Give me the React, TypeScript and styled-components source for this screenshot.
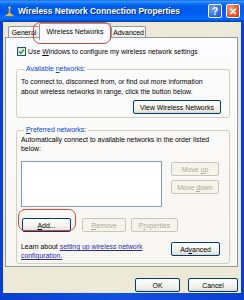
import React from "react";
import styled, { createGlobalStyle, css } from "styled-components";

const GlobalStyle = createGlobalStyle`
  html, body {
    margin: 0;
    padding: 0;
    background: #ffffff;
  }

  body {
    font-family: "Liberation Sans", Arial, sans-serif;
    font-size: 6.9px;
    color: #000000;
  }
`;

const Window = styled.div`
  position: relative;
  width: 244px;
  height: 300px;
  display: flex;
  flex-direction: column;
  background: linear-gradient(to right, #0a3fd0, #1250e0 50%, #0a3fd0);
  overflow: hidden;
`;

const TitleBar = styled.div`
  height: 22px;
  flex: none;
  display: flex;
  align-items: center;
  padding: 0 4px 0 4px;
  background: linear-gradient(
    to bottom,
    #0a62f0 0%,
    #3d98ff 6%,
    #1c84ff 12%,
    #0a6af2 20%,
    #005ce8 30%,
    #005cef 60%,
    #0062f8 70%,
    #0470fe 80%,
    #0066f0 88%,
    #0054d8 94%,
    #003a9e 100%
  );

  h1 {
    flex: 1;
    margin: 0 0 0 3px;
    color: #ffffff;
    font-size: 8.4px;
    font-weight: bold;
    white-space: nowrap;
    text-shadow: 1px 1px 0 #0a1f6e;
  }
`;

const CaptionButton = styled.div<{ $kind: "help" | "close" }>`
  width: 14px;
  height: 14px;
  box-sizing: border-box;
  border: 1px solid #ffffff;
  border-radius: 2px;
  display: flex;
  align-items: center;
  justify-content: center;
  color: #ffffff;
  font-weight: bold;
  font-size: 10px;
  margin-left: 4px;
  background: ${(p) =>
    p.$kind === "help"
      ? "radial-gradient(circle at 30% 30%, #6ea5ff, #2866e6 70%, #1a4fc8)"
      : "radial-gradient(circle at 30% 30%, #f19a7a, #e0532a 65%, #c03a15)"};
`;

const Body = styled.div`
  flex: 1;
  display: flex;
  flex-direction: column;
  margin: 0 3px 7px 3px;
  padding: 0 3px 0 2px;
  background: #ece9d8;
`;

const TabStrip = styled.div`
  height: 16px;
  flex: none;
  display: flex;
  align-items: flex-end;
  padding-left: 3px;
`;

const Tab = styled.div<{ $active?: boolean; $width: number }>`
  box-sizing: border-box;
  width: ${(p) => p.$width}px;
  display: flex;
  align-items: center;
  justify-content: center;
  border: 1px solid #919b9c;
  border-bottom: none;
  border-radius: 2px 2px 0 0;
  white-space: nowrap;
  ${(p) =>
    p.$active
      ? css`
          position: relative;
          z-index: 1;
          height: 17px;
          margin-bottom: -2px;
          padding-bottom: 2px;
          background: #fcfcfe;
        `
      : css`
          height: 12px;
          background: linear-gradient(#ffffff, #f0f0ea 60%, #ecebe5);
          border-right: none;
          &:last-child {
            border-right: 1px solid #919b9c;
          }
        `}
`;

const Panel = styled.div`
  position: relative;
  z-index: 0;
  margin-top: -1px;
  height: 230px;
  box-sizing: border-box;
  border: 1px solid #919b9c;
  background: linear-gradient(#fcfcfe, #f6f5f0);
  padding: 9px 7px 0 10px;
  display: flex;
  flex-direction: column;
`;

const CheckRow = styled.label`
  display: flex;
  align-items: center;
  padding-left: 1px;
  height: 9px;
  white-space: nowrap;
`;

const CheckBox = styled.span`
  width: 9px;
  height: 9px;
  box-sizing: border-box;
  border: 1px solid #1c5180;
  background: linear-gradient(135deg, #dcdcd7, #ffffff);
  margin-right: 2px;
  display: flex;
  align-items: center;
  justify-content: center;
`;

const Group = styled.fieldset<{ $gap: number }>`
  margin: ${(p) => p.$gap}px 0 0 0;
  border: 1px solid #d0d0bf;
  border-radius: 3px;
  min-width: 0;
  display: flex;
  flex-direction: column;

  legend {
    color: #0046d5;
    padding: 0 2px;
    margin-left: 3px;
    line-height: 8px;
  }
`;

const AvailableGroup = styled(Group)`
  padding: 4px 8px 1px 4px;
  height: 46px;
  box-sizing: content-box;
`;

const PreferredGroup = styled(Group)`
  padding: 1px 8px 3px 4px;
`;

const Paragraph = styled.p<{ $lh: number }>`
  margin: 0;
  line-height: ${(p) => p.$lh}px;
  white-space: nowrap;
`;

const Button = styled.button<{ $width: number; $disabled?: boolean }>`
  box-sizing: border-box;
  width: ${(p) => p.$width}px;
  height: 14px;
  padding: 0;
  font-family: inherit;
  font-size: 6.9px;
  border-radius: 2px;
  border: 1px solid ${(p) => (p.$disabled ? "#c9c7ba" : "#003c74")};
  color: ${(p) => (p.$disabled ? "#aca899" : "#000000")};
  background: ${(p) =>
    p.$disabled
      ? "#f5f4ea"
      : "linear-gradient(#ffffff, #f3f2ee 60%, #e6e4dc 90%, #d6d0c5)"};
  white-space: nowrap;
  flex: none;
`;

const RightRow = styled.div`
  display: flex;
  justify-content: flex-end;
  margin-top: 3px;
`;

const ListArea = styled.div`
  display: flex;
  margin-top: 8px;
`;

const ListBox = styled.div`
  width: 141px;
  height: 46px;
  box-sizing: border-box;
  border: 1px solid #7f9db9;
  background: #ffffff;
`;

const SideButtons = styled.div`
  display: flex;
  flex-direction: column;
  gap: 4px;
  margin-left: 9px;
  padding-top: 1px;
`;

const ActionRow = styled.div`
  display: flex;
  align-items: center;
  margin-top: 11px;
  padding-left: 1px;
`;

const LearnRow = styled.div`
  display: flex;
  align-items: flex-start;
  justify-content: space-between;
  margin-top: 10px;
  padding-right: 1px;

  a {
    color: #2a2ab8;
    text-decoration: underline;
  }
`;

const Footer = styled.div`
  display: flex;
  justify-content: flex-end;
  gap: 8px;
  padding-top: 11px;
`;

const Annotation = styled.div<{ $left: number; $top: number; $w: number; $h: number }>`
  position: absolute;
  left: ${(p) => p.$left}px;
  top: ${(p) => p.$top}px;
  width: ${(p) => p.$w}px;
  height: ${(p) => p.$h}px;
  box-sizing: border-box;
  border: 1.3px solid #d9463a;
  border-radius: 7px;
  z-index: 5;
  pointer-events: none;
`;

const TitleIcon = () => (
  <svg width="11" height="11" viewBox="0 0 11 11">
    <path d="M5.5 1 L5.5 7" stroke="#d8b040" strokeWidth="1.4" />
    <path d="M1 10 L5.5 6.5 L10 10 Z" fill="#e8c860" stroke="#b8902a" strokeWidth="0.6" />
    <circle cx="5.5" cy="1.6" r="1.1" fill="#f5dd80" />
  </svg>
);

const Check = () => (
  <svg width="7" height="7" viewBox="0 0 7 7">
    <path d="M1 3.5 L2.8 5.3 L6 1.6" fill="none" stroke="#21a121" strokeWidth="1.5" />
  </svg>
);

const App: React.FC = () => {
  return (
    <>
      <GlobalStyle />
      <Window>
        <TitleBar>
          <TitleIcon />
          <h1>Wireless Network Connection Properties</h1>
          <CaptionButton $kind="help">?</CaptionButton>
          <CaptionButton $kind="close">✕</CaptionButton>
        </TitleBar>

        <Body>
          <TabStrip>
            <Tab $width={31}>General</Tab>
            <Tab $active $width={72}>Wireless Networks</Tab>
            <Tab $width={35}>Advanced</Tab>
          </TabStrip>

          <Panel>
            <CheckRow>
              <CheckBox><Check /></CheckBox>
              <span>Use <u>W</u>indows to configure my wireless network settings</span>
            </CheckRow>

            <AvailableGroup $gap={9}>
              <legend>Available <u>n</u>etworks:</legend>
              <Paragraph $lh={10}>
                To connect to, disconnect from, or find out more information
                <br />
                about wireless networks in range, click the button below.
              </Paragraph>
              <RightRow>
                <Button $width={88}>View Wireless Networks</Button>
              </RightRow>
            </AvailableGroup>

            <PreferredGroup $gap={8}>
              <legend><u>P</u>referred networks:</legend>
              <Paragraph $lh={9}>
                Automatically connect to available networks in the order listed
                <br />
                below:
              </Paragraph>
              <ListArea>
                <ListBox />
                <SideButtons>
                  <Button $width={48} $disabled>Move <u>u</u>p</Button>
                  <Button $width={48} $disabled>Move <u>d</u>own</Button>
                </SideButtons>
              </ListArea>
              <ActionRow>
                <Button $width={49}><u>A</u>dd...</Button>
                <Button $width={44} $disabled style={{ marginLeft: 11 }}><u>R</u>emove</Button>
                <Button $width={47} $disabled style={{ marginLeft: 5 }}>P<u>r</u>operties</Button>
              </ActionRow>
              <LearnRow>
                <Paragraph $lh={9}>
                  Learn about <a>setting up wireless network</a>
                  <br />
                  <a>configuration.</a>
                </Paragraph>
                <Button $width={49}>Ad<u>v</u>anced</Button>
              </LearnRow>
            </PreferredGroup>
          </Panel>

          <Footer>
            <Button $width={45}>OK</Button>
            <Button $width={50}>Cancel</Button>
          </Footer>
        </Body>

        <Annotation $left={33} $top={22} $w={78} $h={22} />
        <Annotation $left={18} $top={209} $w={58} $h={22} />
      </Window>
    </>
  );
};

export default App;
